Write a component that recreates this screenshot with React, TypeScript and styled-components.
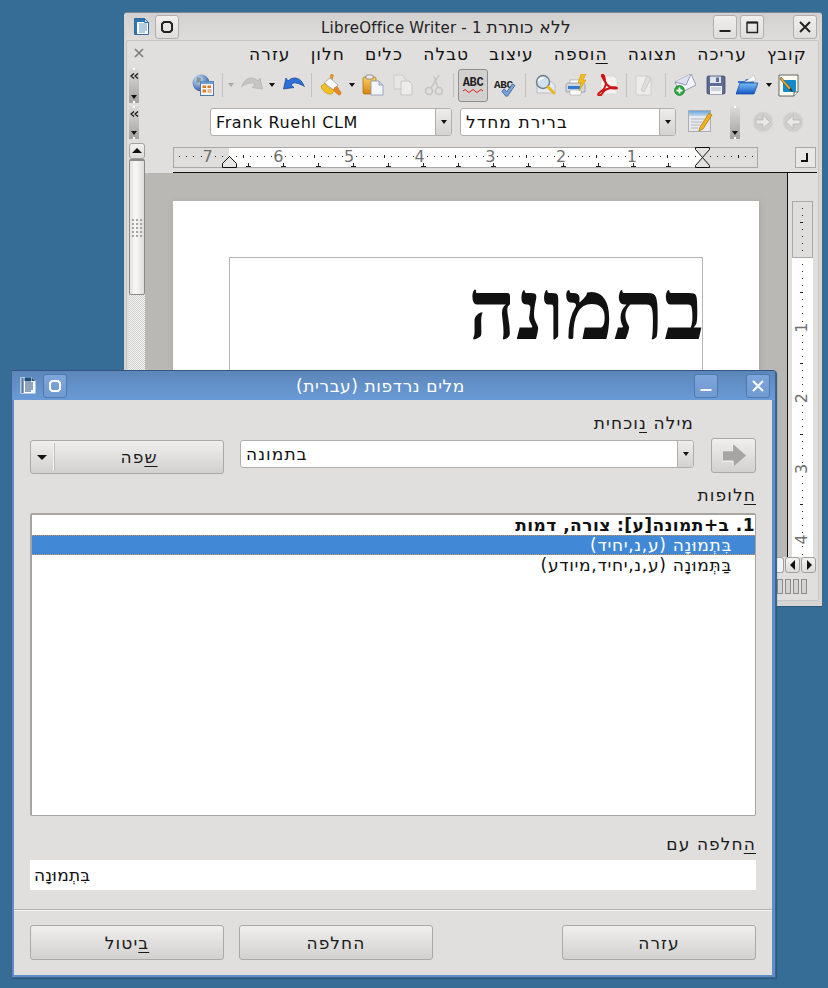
import React from 'react';
import styled, { createGlobalStyle, css } from 'styled-components';

const Global = createGlobalStyle`
  html, body {
    margin: 0;
    padding: 0;
    background: #366d96;
  }
  body {
    font-family: "DejaVu Sans", "Noto Sans", sans-serif;
    color: #111;
  }
  u {
    text-underline-offset: 3px;
  }
`;

const hebrewText = css`
  font-size: 17px;
  letter-spacing: 1.1px;
`;

const Desktop = styled.div`
  position: relative;
  width: 828px;
  height: 988px;
  overflow: hidden;
  background: #366d96;
`;

/* ---------- writer window ---------- */

const WriterWindow = styled.div`
  position: absolute;
  left: 124px;
  top: 12px;
  width: 698px;
  height: 594px;
  box-sizing: border-box;
  display: flex;
  flex-direction: column;
  padding: 0 3px 5px 2px;
  background: #d6d5d3;
  border-top: 1px solid #7c8790;
  border-radius: 3px 3px 0 0;
  box-shadow: 0 1px 1px #2c5878;
`;

const WriterTitle = styled.div`
  flex: none;
  height: 27px;
  display: flex;
  align-items: center;
  padding-right: 2px;
  background: linear-gradient(#d2d1cf, #dedddb);
`;

const TitleText = styled.div<{ $light?: boolean }>`
  flex: 1;
  min-width: 0;
  text-align: center;
  white-space: nowrap;
  font-size: 15px;
  letter-spacing: 0.2px;
  color: ${p => (p.$light ? '#fff' : '#222')};
`;

const TitleHebrew = styled.span<{ $spacing: number }>`
  font-size: 17px;
  letter-spacing: ${p => p.$spacing}px;
`;

const WinButton = styled.div<{ $ml?: number; $blue?: boolean }>`
  flex: none;
  width: 24px;
  height: 24px;
  margin-left: ${p => p.$ml ?? 0}px;
  box-sizing: border-box;
  display: flex;
  align-items: center;
  justify-content: center;
  border: 1px solid ${p => (p.$blue ? '#4f79ab' : '#b0afad')};
  border-radius: 3px;
  background: ${p => (p.$blue ? 'linear-gradient(#7ea6da, #7099d2)' : 'linear-gradient(#f0efee, #dfdedc)')};
`;

const TitleIcon = styled.div<{ $ml: number }>`
  flex: none;
  display: flex;
  margin-left: ${p => p.$ml}px;
`;

const Spacer = styled.div`
  flex: 1;
`;

const Panel = styled.div`
  flex: 1;
  min-height: 0;
  display: flex;
  flex-direction: column;
  background: #e0dfdd;
  border: 1px solid #c6c5c3;
  border-radius: 2px;
`;

const MenuRow = styled.div`
  position: relative;
  flex: none;
  height: 25px;
  display: flex;
  align-items: center;
  justify-content: flex-end;
  gap: 20px;
  padding-right: 11px;
  ${hebrewText}
`;

const MenuClose = styled.span`
  position: absolute;
  left: 7px;
  top: 7px;
  display: flex;
`;

const MenuItem = styled.span``;

const ToolRow = styled.div<{ $h: number }>`
  flex: none;
  height: ${p => p.$h}px;
  display: flex;
  align-items: center;
`;

const Tool = styled.div<{ $ml?: number; $w?: number }>`
  flex: none;
  display: flex;
  align-items: center;
  justify-content: center;
  width: ${p => p.$w ?? 22}px;
  margin-left: ${p => p.$ml ?? 0}px;
`;

const ToolSep = styled.div<{ $ml: number }>`
  flex: none;
  width: 1px;
  height: 24px;
  margin-left: ${p => p.$ml}px;
  background: #c4c3c1;
`;

const ToolDrop = styled.div<{ $ml: number; $off?: boolean }>`
  flex: none;
  width: 0;
  height: 0;
  margin-left: ${p => p.$ml}px;
  border-style: solid;
  border-width: 4px 3.5px 0 3.5px;
  border-color: ${p => (p.$off ? '#a9a8a6' : '#111')} transparent transparent transparent;
`;

const ToggledTool = styled.div<{ $ml: number }>`
  flex: none;
  width: 30px;
  height: 33px;
  box-sizing: border-box;
  margin-left: ${p => p.$ml}px;
  display: flex;
  align-items: center;
  justify-content: center;
  background: #d2d1cf;
  border: 1px solid #8f8e8c;
  border-radius: 3px;
`;

const Handle = styled.div<{ $ml?: number; $h: number; $bare?: boolean }>`
  position: relative;
  flex: none;
  width: 10px;
  height: ${p => p.$h}px;
  margin-left: ${p => p.$ml ?? 2}px;
  box-sizing: border-box;
  display: flex;
  flex-direction: column;
  align-items: center;
  justify-content: ${p => (p.$bare ? 'flex-end' : 'space-between')};
  padding: 5px 0 4px;
  background: linear-gradient(#dcdbd9, #a3a2a0);
  &::before,
  &::after {
    content: '';
    position: absolute;
    left: 4px;
    width: 2px;
    height: 2px;
    background: #fff;
  }
  &::before {
    top: 0;
  }
  &::after {
    bottom: 0;
  }
`;

const HandleDrop = styled.div`
  width: 0;
  height: 0;
  border-style: solid;
  border-width: 4px 3.5px 0 3.5px;
  border-color: #111 transparent transparent transparent;
`;

const Combo = styled.div<{ $ml: number; $w: number; $mt?: number }>`
  flex: none;
  box-sizing: border-box;
  width: ${p => p.$w}px;
  height: 28px;
  margin-left: ${p => p.$ml}px;
  margin-top: ${p => p.$mt ?? 0}px;
  display: flex;
  background: #fff;
  border: 1px solid #b0afad;
  border-radius: 3px;
  overflow: hidden;
`;

const ComboText = styled.div<{ $hebrew?: boolean }>`
  flex: 1;
  display: flex;
  align-items: center;
  padding: 0 5px;
  font-size: ${p => (p.$hebrew ? 17 : 16)}px;
  letter-spacing: ${p => (p.$hebrew ? 1.1 : 0.6)}px;
  white-space: nowrap;
`;

const ComboDrop = styled.div`
  flex: none;
  width: 15px;
  display: flex;
  align-items: center;
  justify-content: center;
  border-left: 1px solid #b0afad;
  background: linear-gradient(#eeedeb, #d3d2d0);
`;

const Body = styled.div`
  flex: 1;
  min-height: 0;
  display: flex;
  margin-top: 3px;
  padding-left: 2px;
`;

const LeftScroll = styled.div`
  flex: none;
  width: 16px;
  display: flex;
  flex-direction: column;
  box-sizing: border-box;
`;

const ScrollUp = styled.div`
  flex: none;
  height: 16px;
  box-sizing: border-box;
  display: flex;
  align-items: center;
  justify-content: center;
  border: 1px solid #a0a09e;
  border-radius: 3px;
  background: linear-gradient(#f4f3f2, #dcdbd9);
`;

const ScrollThumb = styled.div`
  flex: none;
  height: 136px;
  box-sizing: border-box;
  display: flex;
  align-items: center;
  justify-content: center;
  border: 1px solid #8b8a88;
  border-top: 2px solid #8b8a88;
  border-radius: 2px;
  background: linear-gradient(90deg, #e3e2e0, #f8f8f7 40%, #dedddb);
`;

const Gripper = styled.div`
  width: 12px;
  height: 19px;
  background-image: radial-gradient(#a5a4a2 0.8px, transparent 1px);
  background-size: 4px 4px;
`;

const ScrollTrack = styled.div`
  flex: 1;
  background-image: repeating-conic-gradient(#f4f4f4 0 25%, #cfcfcd 0 50%);
  background-size: 2px 2px;
`;

const MainColumn = styled.div`
  flex: 1;
  min-width: 0;
  display: flex;
  flex-direction: column;
`;

const RulerRow = styled.div`
  position: relative;
  flex: none;
  height: 30px;
  box-sizing: border-box;
  display: flex;
  align-items: flex-start;
  padding: 4px 2px 0 28px;
  &::after {
    content: '';
    position: absolute;
    left: 28px;
    right: 1px;
    bottom: 0;
    height: 1px;
    background: #111;
  }
`;

const CornerButton = styled.div`
  flex: none;
  width: 21px;
  height: 21px;
  margin-left: auto;
  box-sizing: border-box;
  display: flex;
  align-items: center;
  justify-content: center;
  border: 1px solid #a8a7a5;
  background: #e8e7e5;
`;

const DocRow = styled.div`
  flex: 1;
  min-height: 0;
  display: flex;
`;

const DocArea = styled.div`
  flex: 1;
  min-width: 0;
  overflow: hidden;
  box-sizing: border-box;
  padding: 28px 0 0 28px;
  background: #b9b8b5;
  border-right: 1px solid #111;
`;

const Page = styled.div`
  width: 586px;
  height: 700px;
  box-sizing: border-box;
  padding: 56px 56px 0;
  background: #fff;
  box-shadow: 1px 1px 6px #a5a4a1;
`;

const TextFrame = styled.div`
  height: 300px;
  border: 1px solid #b5b5b5;
  border-width: 1px 1px 0 1px;
  text-align: right;
`;

const Heading = styled.div`
  margin-right: -2px;
  font-family: "Liberation Serif", serif;
  font-weight: bold;
  font-size: 83px;
  line-height: 107px;
  color: #111;
`;

const VRulerCol = styled.div`
  flex: none;
  width: 30px;
  box-sizing: border-box;
  padding: 28px 0 0 4px;
`;

const HScrollRow = styled.div`
  flex: none;
  height: 16px;
  display: flex;
  justify-content: flex-end;
  gap: 1px;
  padding-right: 2px;
`;

const ArrowBtn = styled.div`
  flex: none;
  width: 15px;
  height: 16px;
  box-sizing: border-box;
  display: flex;
  align-items: center;
  justify-content: center;
  border: 1px solid #a0a09e;
  border-radius: 3px;
  background: linear-gradient(#f4f3f2, #dcdbd9);
`;

const HThumb = styled.div`
  flex: none;
  width: 14px;
  box-sizing: border-box;
  background: #f4f3f2;
  border: 1px solid #a0a09e;
  border-left: none;
  border-radius: 0 3px 3px 0;
`;

const StatusBar = styled.div`
  flex: none;
  height: 27px;
  display: flex;
  align-items: center;
  justify-content: flex-end;
  gap: 2px;
  padding: 0 11px 0 0;
`;

const StatusCell = styled.div`
  width: 4px;
  height: 13px;
  border: 1px solid #8d8c8a;
  background: #d4d3d1;
`;

/* ---------- thesaurus dialog ---------- */

const Dialog = styled.div`
  position: absolute;
  left: 11px;
  top: 370px;
  width: 765px;
  height: 608px;
  box-sizing: border-box;
  display: flex;
  flex-direction: column;
  border: 1px solid #3f628e;
  border-top-color: #33557f;
  border-radius: 3px 3px 0 0;
  background: #5f8dc7;
  padding: 1px 3px 2px 2px;
  box-shadow: 1px 1px 1px #2c5878;
`;

const DialogTitle = styled.div`
  flex: none;
  height: 29px;
  display: flex;
  align-items: center;
  background: linear-gradient(#5c86b9, #6a9bd7);
  margin: -1px -3px 0 -2px;
  padding-right: 5px;
`;

const DialogBody = styled.div`
  flex: 1;
  min-height: 0;
  display: flex;
  flex-direction: column;
  background: #e0dfdd;
`;

const DialogContent = styled.div`
  flex: 1;
  min-height: 0;
  display: flex;
  flex-direction: column;
  padding: 0 16px;
`;

const FieldLabel = styled.div<{ $mt: number; $mr?: number }>`
  flex: none;
  height: 18px;
  line-height: 18px;
  margin-top: ${p => p.$mt}px;
  margin-right: ${p => p.$mr ?? 0}px;
  ${hebrewText}
  text-align: right;
  direction: rtl;
  color: #1a1a1a;
`;

const SearchRow = styled.div`
  flex: none;
  display: flex;
  align-items: flex-start;
  margin-top: 6px;
`;

const PushButton = styled.div<{ $w?: number; $h?: number; $ml?: number; $mt?: number; $pl?: number }>`
  flex: none;
  position: relative;
  box-sizing: border-box;
  width: ${p => p.$w ?? 194}px;
  height: ${p => p.$h ?? 35}px;
  margin-left: ${p => p.$ml ?? 0}px;
  margin-top: ${p => p.$mt ?? 0}px;
  padding-left: ${p => p.$pl ?? 0}px;
  display: flex;
  align-items: center;
  justify-content: center;
  border: 1px solid #aaa9a7;
  border-radius: 3px;
  background: linear-gradient(#f0efed, #d2d1cf);
  ${hebrewText}
  color: #1a1a1a;
`;

const LangDrop = styled.div`
  position: absolute;
  left: 0;
  top: 2px;
  bottom: 2px;
  width: 22px;
  display: flex;
  align-items: center;
  justify-content: center;
  border-right: 1px solid #f6f6f5;
  box-shadow: 1px 0 0 #bdbcba;
`;

const LargeDrop = styled.div`
  width: 0;
  height: 0;
  border-style: solid;
  border-width: 5px 5px 0 5px;
  border-color: #111 transparent transparent transparent;
`;

const ListBox = styled.div`
  flex: none;
  height: 303px;
  box-sizing: border-box;
  margin-top: 9px;
  background: #fff;
  border: 1px solid #a6a5a3;
  border-width: 2px 1px 1px 2px;
  border-radius: 2px;
  direction: rtl;
  font-size: 17px;
`;

const ListRow = styled.div<{ $head?: boolean; $selected?: boolean }>`
  height: 20px;
  line-height: 20px;
  box-sizing: border-box;
  padding-right: ${p => (p.$head ? 0 : 23)}px;
  font-weight: ${p => (p.$head ? 'bold' : 'normal')};
  letter-spacing: ${p => (p.$head ? 0.45 : 0.7)}px;
  color: ${p => (p.$selected ? '#fff' : '#111')};
  background: ${p => (p.$selected ? '#4188d6' : 'transparent')};
  white-space: nowrap;
  ${p =>
    p.$selected &&
    css`
      border-top: 1px dotted #c8925a;
      border-bottom: 1px dotted #c8925a;
      line-height: 18px;
    `}
`;

const ReplaceInput = styled.div`
  flex: none;
  height: 30px;
  line-height: 30px;
  margin-top: 7px;
  padding-left: 4px;
  background: #fff;
  font-size: 17px;
  letter-spacing: 0.2px;
`;

const Footer = styled.div`
  flex: none;
  height: 66px;
  box-sizing: border-box;
  display: flex;
  align-items: flex-start;
  padding: 15px 16px 0;
  border-top: 1px solid #b3b2b0;
  box-shadow: inset 0 1px 0 #f4f4f3;
`;

/* ---------- icons ---------- */

const Glyph = ({ size = 22, children }: { size?: number; children: React.ReactNode }) => (
  <svg width={size} height={size} viewBox="0 0 22 22">
    {children}
  </svg>
);

const DocIcon = () => (
  <svg width="15" height="17" viewBox="0 0 15 17">
    <path d="M0.5 0.5h10l4 4v12H0.5z" fill="#fff" stroke="#2d6ca3" />
    <path d="M1 1h2v15H1zM3 1h7v3H3z" fill="#2d74b0" />
    <path d="M5 6h8M5 8h8M5 10h8M5 12h8M5 14h6" stroke="#6d9cc4" />
    <path d="M10.500 0.500l4 4h-4z" fill="#cfe0ef" stroke="#2d6ca3" />
  </svg>
);

const DialogDocIcon = () => (
  <svg width="16" height="17" viewBox="0 0 16 17">
    <path d="M0.500 0.500h11l4 4v12H0.500z" fill="#fff" />
    <path d="M2 1v15M3 1v15" stroke="#1e4a7a" />
    <path d="M11 1H5v3h6zM5 6h8M5 8h8M5 10h8M5 12h8M5 14h6" stroke="#1e4a7a" fill="#1e4a7a" />
    <path d="M12 1l3 3h-3z" fill="#1e4a7a" />
  </svg>
);

const Sticky = ({ color }: { color: string }) => (
  <svg width="14" height="14" viewBox="0 0 14 14">
    <path d="M4 2h6l2 2v6l-2 2H4l-2-2V4z" fill="none" stroke={color} strokeWidth="2" />
  </svg>
);

const MinGlyph = ({ color }: { color: string }) => (
  <svg width="14" height="14" viewBox="0 0 14 14">
    <rect x="1.500" y="10" width="11" height="2" fill={color} />
  </svg>
);

const MaxGlyph = () => (
  <svg width="14" height="14" viewBox="0 0 14 14">
    <path d="M2 2.500h10.500v10H2z" fill="none" stroke="#222" strokeWidth="1.4" />
    <path d="M2 2.500h10.500" stroke="#222" strokeWidth="2" />
  </svg>
);

const CloseGlyph = ({ color }: { color: string }) => (
  <svg width="14" height="14" viewBox="0 0 14 14">
    <path d="M2 2l10 10M12 2L2 12" stroke={color} strokeWidth="2" />
  </svg>
);

const MenuX = () => (
  <svg width="10" height="10" viewBox="0 0 10 10">
    <path d="M1 1l8 8M9 1L1 9" stroke="#7d7d7b" strokeWidth="1.7" />
  </svg>
);

const Chevrons = () => (
  <svg width="9" height="6" viewBox="0 0 9 6">
    <path d="M4 0.500L1 3l3 2.500M8 0.500L5 3l3 2.500" fill="none" stroke="#111" strokeWidth="1.2" />
  </svg>
);

const GlobeIcon = () => (
  <Glyph>
    <defs>
      <radialGradient id="gl" cx="0.35" cy="0.3" r="0.8">
        <stop offset="0" stopColor="#dbe8f6" />
        <stop offset="0.6" stopColor="#5f87c4" />
        <stop offset="1" stopColor="#24447f" />
      </radialGradient>
    </defs>
    <circle cx="9" cy="9" r="8.500" fill="url(#gl)" />
    <path d="M5 3l4 1-1 4-4 1zM11 10l3 1-2 5-2-2z" fill="#3c6a4f" opacity="0.55" />
    <rect x="8.500" y="7.500" width="13" height="14" fill="#f4f6fa" stroke="#4d78a8" />
    <rect x="8.500" y="7.500" width="13" height="2.500" fill="#6d9ccd" />
    <rect x="10.500" y="11.500" width="3.500" height="2.500" fill="#e07a1f" />
    <rect x="15.500" y="11.500" width="3.500" height="2.500" fill="#e07a1f" />
    <rect x="10.500" y="15.500" width="3.500" height="3" fill="#e07a1f" />
    <path d="M15.500 16h4M15.500 18h4" stroke="#e07a1f" />
  </Glyph>
);

const CurveArrow = ({ fill, stroke, flip }: { fill: string; stroke: string; flip?: boolean }) => (
  <Glyph>
    <g transform={flip ? 'translate(22 0) scale(-1 1)' : undefined}>
      <path
        d="M1 12C3 6 7 4 10.500 4c3 0 5 1.500 6.500 3l2-3 2.500 11-10.500-1.500 3-2.500c-1-1.500-3-2.500-5-2-3 .5-6 2-8.500 3.500z"
        fill={fill}
        stroke={stroke}
        strokeWidth="0.7"
        strokeLinejoin="round"
      />
    </g>
  </Glyph>
);

const BucketIcon = () => (
  <Glyph>
    <path d="M11 0l2.500 1-2 8-2.500-1z" fill="#e79a2c" stroke="#b87416" strokeWidth="0.4" />
    <path d="M4 9l6-5 8 7-4 5z" fill="#fafafa" stroke="#9c9c9c" strokeWidth="0.7" />
    <path d="M1 12l4-3c2 4 5 6 9 7l-2 4c-5 1-10-3-11-8z" fill="#f1c21f" stroke="#c08a12" strokeWidth="0.6" />
    <path d="M14.500 13.500l2.500-1 4 6c.5 1.500-1 3-2.500 2.500l-4.500-4z" fill="#e8871e" stroke="#b8600f" strokeWidth="0.4" />
  </Glyph>
);

const PasteIcon = () => (
  <Glyph>
    <defs>
      <linearGradient id="pa" x1="0" y1="0" x2="0" y2="1">
        <stop offset="0" stopColor="#f7cf60" />
        <stop offset="1" stopColor="#d98212" />
      </linearGradient>
    </defs>
    <rect x="1" y="3" width="13" height="17" rx="1.500" fill="url(#pa)" stroke="#a06a14" strokeWidth="0.7" />
    <rect x="4" y="1" width="7" height="4" rx="1" fill="#e9e9e9" stroke="#777" strokeWidth="0.7" />
    <path d="M9 7h8l4 4v10H9z" fill="#f4f5fa" stroke="#8a94ad" strokeWidth="0.8" />
    <path d="M17 7v4h4" fill="#c8cfe0" stroke="#8a94ad" strokeWidth="0.8" />
  </Glyph>
);

const CopyIcon = () => (
  <Glyph>
    <path d="M2 1h8l3 3v11H2z" fill="#e6e6e4" stroke="#cbcac8" />
    <path d="M9 7h8l3 3v11H9z" fill="#ececea" stroke="#c6c5c3" />
  </Glyph>
);

const ScissorsIcon = () => (
  <Glyph>
    <path d="M16 1L8 14M11 2l4 12" stroke="#c9c8c6" strokeWidth="1.8" fill="none" />
    <circle cx="6" cy="17" r="3.500" fill="none" stroke="#c4c3c1" strokeWidth="1.6" />
    <circle cx="16" cy="17" r="3.500" fill="none" stroke="#c4c3c1" strokeWidth="1.6" />
  </Glyph>
);

const AbcLabel = styled.span<{ $size: number }>`
  font-family: "Liberation Mono", monospace;
  font-size: ${p => p.$size}px;
  font-weight: bold;
  line-height: 10px;
  letter-spacing: -0.4px;
  color: #222;
`;

const AbcStack = styled.div`
  display: flex;
  flex-direction: column;
  align-items: center;
`;

const AbcPlain = styled.div`
  position: relative;
  width: 22px;
  height: 23px;
  margin-top: -2px;
`;

const AbcCheck = styled.div`
  position: absolute;
  left: 5px;
  top: 9px;
`;

const WavyIcon = () => (
  <svg width="20" height="5" viewBox="0 0 20 5">
    <path d="M0 3q2-3 4 0t4 0 4 0 4 0 4 0" stroke="#d82020" fill="none" />
  </svg>
);

const CheckIcon = () => (
  <svg width="17" height="14" viewBox="0 0 20 17">
    <path d="M3 10l3-3 3 4 7-10 3 2-9 13H8z" fill="#7ba4da" stroke="#28558f" strokeWidth="0.9" strokeLinejoin="round" />
  </svg>
);

const MagnifierIcon = () => (
  <Glyph>
    <path d="M3 6h12l6 5v8H3z" fill="#e8e9ee" stroke="#a9adb8" strokeWidth="0.7" />
    <circle cx="9" cy="8" r="6.500" fill="#d0e2ec" stroke="#6d7f8a" strokeWidth="1.4" />
    <path d="M4.500 7c1-2 3-3 5-3" stroke="#fff" fill="none" strokeWidth="1.4" />
    <path d="M14 13l6 6" stroke="#e8b523" strokeWidth="3" strokeLinecap="round" />
  </Glyph>
);

const PrinterIcon = () => (
  <Glyph>
    <path d="M5 6h10v6H5z" fill="#fff" stroke="#9aa0ab" strokeWidth="0.6" />
    <path d="M1 11c0-1 1-2 2-2h14c2 0 3 1 3 2v7H1z" fill="#d4d7dd" stroke="#8a8e97" strokeWidth="0.7" />
    <path d="M3 12h12v3H3z" fill="#2f7bd1" />
    <path d="M5 16h11v5H5z" fill="#fff" stroke="#a6a9af" strokeWidth="0.6" />
    <path d="M16 0h5l-3 6h3l-7 11 2-8h-3z" fill="#f2bd1c" stroke="#c98a0a" strokeWidth="0.5" />
  </Glyph>
);

const PdfIcon = () => (
  <Glyph>
    <path d="M5 2h13l3 3v15H5z" fill="#f3f2f0" stroke="#d4d3d1" strokeWidth="0.7" />
    <path
      d="M6 1c2-1 3 3 3 6 1 3 3 5 5 6 2 0 6 0 7 1-2 1-5 0-7 0l-5 2-4 5c-2 1-4 0-2-2l5-4 2-5C9 6 5 3 6 1z"
      fill="none"
      stroke="#d01414"
      strokeWidth="2"
      strokeLinejoin="round"
    />
  </Glyph>
);

const EditDocIcon = () => (
  <Glyph>
    <path d="M3 2h10l5 3v16H3z" fill="#ececea" stroke="#cfcecc" />
    <path d="M8 16l6-14 4 2-7 14z" fill="#dfdedc" stroke="#c4c3c1" strokeWidth="0.8" />
  </Glyph>
);

const EnvelopeIcon = () => (
  <Glyph>
    <path d="M1 8L17 0l5 11L6 19z" fill="#f2f2fa" stroke="#8387ac" strokeWidth="0.8" />
    <path d="M1 8l11 3L17 0" fill="#dfe0ef" stroke="#8387ac" strokeWidth="0.8" />
    <circle cx="5.500" cy="16.500" r="5" fill="#28a63a" stroke="#0f7a20" strokeWidth="0.6" />
    <path d="M5.500 13.500v6M2.500 16.500h6" stroke="#fff" strokeWidth="1.8" />
  </Glyph>
);

const FloppyIcon = () => (
  <Glyph>
    <rect x="2" y="2" width="18" height="18" rx="1.500" fill="#5c6c94" stroke="#2f3c62" strokeWidth="0.7" />
    <rect x="5" y="2.500" width="11" height="6.500" fill="#dfe3ee" />
    <rect x="11" y="3.500" width="3" height="4.500" fill="#5c6c94" />
    <rect x="5" y="12" width="12" height="8" fill="#f4f5f8" />
    <path d="M6 14h10M6 16h10" stroke="#aab0c2" />
  </Glyph>
);

const FolderIcon = () => (
  <Glyph>
    <defs>
      <linearGradient id="fo" x1="0" y1="0" x2="0" y2="1">
        <stop offset="0" stopColor="#7cc0f4" />
        <stop offset="1" stopColor="#1257c6" />
      </linearGradient>
    </defs>
    <path d="M2 7h7l1-2h8v4H2z" fill="#3a78cf" />
    <path d="M9 8l9-7 2 6z" fill="#f6f6f6" stroke="#b5b5b5" strokeWidth="0.5" />
    <path d="M4 9h18l-4 11H0z" fill="url(#fo)" stroke="#0e44a0" strokeWidth="0.7" />
  </Glyph>
);

const NavigatorIcon = () => (
  <svg width="21" height="23" viewBox="0 0 21 23">
    <path d="M1 1h19v17l-4 4H1z" fill="#fbfaf2" stroke="#444" strokeWidth="0.8" />
    <path d="M16 22v-4h4" fill="#fff" stroke="#444" strokeWidth="0.8" />
    <rect x="5" y="6" width="13" height="12" rx="1" fill="#148bc9" />
    <path d="M3 3l10 11-2 2L2 5z" fill="#d9a72a" stroke="#3a3a3a" strokeWidth="0.5" />
    <path d="M11 16l2-2 2 4z" fill="#333" />
  </svg>
);

const NoteIcon = () => (
  <svg width="25" height="24" viewBox="0 0 25 24">
    <defs>
      <linearGradient id="no" x1="0" y1="0" x2="0" y2="1">
        <stop offset="0" stopColor="#6aa8dd" />
        <stop offset="1" stopColor="#c4d6e6" />
      </linearGradient>
    </defs>
    <rect x="0.500" y="0.500" width="22" height="21" fill="#e7e9ec" stroke="#a9adb3" />
    <rect x="1" y="1" width="21" height="5" fill="url(#no)" />
    <path d="M3 9h13M3 12h11M3 15h9M3 18h7" stroke="#b4b8be" />
    <path d="M21 3l3 2-9 14-4 2 1-4z" fill="#f2b01e" stroke="#a8780f" strokeWidth="0.7" />
  </svg>
);

const RoundArrow = ({ flip }: { flip?: boolean }) => (
  <svg width="22" height="22" viewBox="0 0 22 22">
    <circle cx="11" cy="11" r="10" fill="#cfcecc" stroke="#d8d7d5" />
    <path
      transform={flip ? 'translate(22 0) scale(-1 1)' : undefined}
      d="M4 9h7V4.500l7 6.500-7 6.500V13H4z"
      fill="#e9e8e6"
      stroke="#b6b5b3"
      strokeWidth="0.7"
    />
  </svg>
);

const SmallTriangle = ({ dir }: { dir: 'up' | 'down' | 'left' | 'right' }) => {
  const d = { up: 'M0 7L5 2l5 5z', down: 'M0 3h10L5 8z', left: 'M7 0v10L2 5z', right: 'M3 0v10l5-5z' }[dir];
  return (
    <svg width="10" height="10" viewBox="0 0 10 10">
      <path d={d} fill="#111" />
    </svg>
  );
};

const DialogArrow = () => (
  <svg width="26" height="25" viewBox="0 0 30 28">
    <path d="M1 8h13V1l15 13-15 13v-7H1z" fill="#a6a5a3" />
    <path d="M1.500 20V8.500H14" fill="none" stroke="#fff" />
    <path d="M1.500 20.500H14v6" fill="none" stroke="#fff" />
  </svg>
);

const CornerGlyph = () => (
  <svg width="11" height="11" viewBox="0 0 11 11">
    <path d="M7 1v8H1" fill="none" stroke="#111" strokeWidth="2" />
  </svg>
);

/* ---------- rulers ---------- */

const RulerSvg = styled.svg`
  flex: none;
  display: block;
`;

const HorizontalRuler = () => {
  const zero = 529.5;
  const marks = [];
  for (let n = -7; n <= 75; n++) {
    const x = zero - n * 7.07;
    if (n > 0 && n % 10 === 0) {
      marks.push(
        <text key={n} x={x} y={15} textAnchor="middle" fontSize="16" fontFamily="DejaVu Sans" fill="#707070">
          {n / 10}
        </text>,
      );
    } else if (n !== 0 && Math.abs(n) % 5 === 0) {
      marks.push(<rect key={n} x={Math.round(x)} y={8} width={1} height={3} fill="#222" />);
    } else if (n !== 0) {
      marks.push(<rect key={n} x={Math.round(x)} y={9} width={1} height={1} fill="#222" />);
    }
  }
  const stops = [];
  for (let i = 0; i < 13; i++) {
    const x = 75 + i * 35;
    stops.push(<path key={i} d={`M${x - 2} 19.5h5M${x + 0.5} 16v3`} stroke="#222" fill="none" />);
  }
  return (
    <RulerSvg width="585" height="21" viewBox="0 0 585 21">
      <rect x="0.500" y="0.500" width="584" height="20" fill="#dfdedc" stroke="#a9a8a6" />
      <rect x="56" y="1" width="474" height="19" fill="#fff" />
      {marks}
      {stops}
      <path d="M49.500 20.500v-4l7-7 7 7v4z" fill="#e8e7e5" stroke="#111" />
      <path d="M522.500 0.500h14v2l-7 8 7 8v2h-14v-2l7-8-7-8z" fill="#e4e3e1" stroke="#111" />
    </RulerSvg>
  );
};

const VerticalRuler = () => {
  const zero = 56;
  const marks = [];
  for (let n = -7; n <= 49; n++) {
    const y = zero + n * 7.06;
    if (n > 0 && n % 10 === 0) {
      marks.push(
        <text
          key={n}
          x={0}
          y={0}
          transform={`translate(15 ${y}) rotate(-90)`}
          textAnchor="middle"
          fontSize="16"
          fontFamily="DejaVu Sans"
          fill="#707070"
        >
          {n / 10}
        </text>,
      );
    } else if (n !== 0 && Math.abs(n) % 5 === 0) {
      marks.push(<rect key={n} x={8} y={Math.round(y)} width={3} height={1} fill="#222" />);
    } else if (n !== 0) {
      marks.push(<rect key={n} x={10} y={Math.round(y)} width={1} height={1} fill="#222" />);
    }
  }
  return (
    <RulerSvg width="21" height="356" viewBox="0 0 21 356">
      <rect x="0" y="0" width="21" height="356" fill="#fff" />
      <rect x="0.500" y="0.500" width="20" height="56" fill="#dfdedc" stroke="#a9a8a6" />
      {marks}
    </RulerSvg>
  );
};

/* ---------- page ---------- */

const menuItems: React.ReactNode[] = [
  'עזרה',
  'חלון',
  'כלים',
  'טבלה',
  'עיצוב',
  <><u>ה</u>וספה</>,
  'תצוגה',
  'עריכה',
  'קובץ',
];

const App: React.FC = () => {
  return (
    <Desktop>
      <Global />

      <WriterWindow>
        <WriterTitle>
          <TitleIcon $ml={8}>
            <DocIcon />
          </TitleIcon>
          <WinButton $ml={6}>
            <Sticky color="#222" />
          </WinButton>
          <TitleText dir="rtl"><TitleHebrew $spacing={0.3}>ללא כותרת</TitleHebrew> 1 - LibreOffice Writer</TitleText>
          <WinButton>
            <MinGlyph color="#222" />
          </WinButton>
          <WinButton $ml={3}>
            <MaxGlyph />
          </WinButton>
          <WinButton $ml={29}>
            <CloseGlyph color="#222" />
          </WinButton>
        </WriterTitle>

        <Panel>
          <MenuRow>
            <MenuClose>
              <MenuX />
            </MenuClose>
            {menuItems.map((item, i) => (
              <MenuItem key={i} dir="rtl">
                {item}
              </MenuItem>
            ))}
          </MenuRow>

          <ToolRow $h={38}>
            <Handle $h={35}>
              <Chevrons />
              <HandleDrop />
            </Handle>
            <Tool $ml={53}><GlobeIcon /></Tool>
            <ToolSep $ml={8} />
            <ToolDrop $ml={5} $off />
            <Tool $ml={7}><CurveArrow fill="#c6c5c3" stroke="#b3b2b0" /></Tool>
            <ToolDrop $ml={6} />
            <Tool $ml={8}><CurveArrow fill="#2c6fd6" stroke="#123f92" flip /></Tool>
            <ToolSep $ml={6} />
            <Tool $ml={8}><BucketIcon /></Tool>
            <ToolDrop $ml={7} />
            <Tool $ml={7}><PasteIcon /></Tool>
            <Tool $ml={8}><CopyIcon /></Tool>
            <Tool $ml={9}><ScissorsIcon /></Tool>
            <ToolSep $ml={8} />
            <ToggledTool $ml={4}>
              <AbcStack>
                <AbcLabel $size={12}>ABC</AbcLabel>
                <WavyIcon />
              </AbcStack>
            </ToggledTool>
            <Tool $ml={6}>
              <AbcPlain>
                <AbcCheck><CheckIcon /></AbcCheck>
                <AbcLabel $size={11}>ABC</AbcLabel>
              </AbcPlain>
            </Tool>
            <ToolSep $ml={9} />
            <Tool $ml={8}><MagnifierIcon /></Tool>
            <Tool $ml={9}><PrinterIcon /></Tool>
            <Tool $ml={9}><PdfIcon /></Tool>
            <ToolSep $ml={8} />
            <Tool $ml={6}><EditDocIcon /></Tool>
            <ToolSep $ml={10} />
            <Tool $ml={8}><EnvelopeIcon /></Tool>
            <Tool $ml={9}><FloppyIcon /></Tool>
            <Tool $ml={9}><FolderIcon /></Tool>
            <ToolDrop $ml={8} />
            <Tool $ml={6} $w={21}><NavigatorIcon /></Tool>
          </ToolRow>

          <ToolRow $h={36}>
            <Handle $h={33}>
              <Chevrons />
              <HandleDrop />
            </Handle>
            <Combo $ml={71} $w={242}>
              <ComboText>Frank Ruehl CLM</ComboText>
              <ComboDrop><HandleDrop /></ComboDrop>
            </Combo>
            <Combo $ml={8} $w={216}>
              <ComboText $hebrew>ברירת מחדל</ComboText>
              <ComboDrop><HandleDrop /></ComboDrop>
            </Combo>
            <Tool $ml={12} $w={25}><NoteIcon /></Tool>
            <Handle $ml={17} $h={33} $bare>
              <HandleDrop />
            </Handle>
            <Tool $ml={12}><RoundArrow /></Tool>
            <Tool $ml={8}><RoundArrow flip /></Tool>
          </ToolRow>

          <Body>
            <LeftScroll>
              <ScrollUp><SmallTriangle dir="up" /></ScrollUp>
              <ScrollThumb><Gripper /></ScrollThumb>
              <ScrollTrack />
            </LeftScroll>
            <MainColumn>
              <RulerRow>
                <HorizontalRuler />
                <CornerButton><CornerGlyph /></CornerButton>
              </RulerRow>
              <DocRow>
                <DocArea>
                  <Page>
                    <TextFrame>
                      <Heading dir="rtl">בתמונה</Heading>
                    </TextFrame>
                  </Page>
                </DocArea>
                <VRulerCol>
                  <VerticalRuler />
                </VRulerCol>
              </DocRow>
            </MainColumn>
          </Body>
          <HScrollRow>
            <HThumb />
            <ArrowBtn><SmallTriangle dir="left" /></ArrowBtn>
            <ArrowBtn><SmallTriangle dir="right" /></ArrowBtn>
          </HScrollRow>
          <StatusBar>
            <StatusCell />
            <StatusCell />
            <StatusCell />
            <StatusCell />
          </StatusBar>
        </Panel>
      </WriterWindow>

      <Dialog>
        <DialogTitle>
          <TitleIcon $ml={8}>
            <DialogDocIcon />
          </TitleIcon>
          <WinButton $ml={7} $blue>
            <Sticky color="#fff" />
          </WinButton>
          <TitleText $light dir="rtl"><TitleHebrew $spacing={0.6}>מלים נרדפות (עברית)</TitleHebrew></TitleText>
          <WinButton $blue>
            <MinGlyph color="#fff" />
          </WinButton>
          <WinButton $ml={28} $blue>
            <CloseGlyph color="#fff" />
          </WinButton>
        </DialogTitle>

        <DialogBody>
          <DialogContent>
            <FieldLabel $mt={14} $mr={62}>מילה <u>נ</u>וכחית</FieldLabel>
            <SearchRow>
              <PushButton $mt={2} $h={34} $pl={24}>
                <LangDrop><LargeDrop /></LangDrop>
                <span dir="rtl"><u>ש</u>פה</span>
              </PushButton>
              <Combo $ml={16} $w={454} $mt={2}>
                <ComboText $hebrew>בתמונה</ComboText>
                <ComboDrop><HandleDrop /></ComboDrop>
              </Combo>
              <PushButton $w={45} $ml={17}>
                <DialogArrow />
              </PushButton>
            </SearchRow>

            <FieldLabel $mt={12}><u>ח</u>לופות</FieldLabel>

            <ListBox>
              <ListRow $head>1. ב+תמונה[ע]: צורה, דמות</ListRow>
              <ListRow $selected>בִּתְמוּנָה (ע,נ,יחיד)</ListRow>
              <ListRow>בַּתְּמוּנָה (ע,נ,יחיד,מיודע)</ListRow>
            </ListBox>

            <FieldLabel $mt={19}><u>ה</u>חלפה עם</FieldLabel>
            <ReplaceInput>בִּתְמוּנָה</ReplaceInput>
          </DialogContent>

          <Footer>
            <PushButton><span dir="rtl"><u>ב</u>יטול</span></PushButton>
            <PushButton $ml={15}><span dir="rtl">החלפה</span></PushButton>
            <Spacer />
            <PushButton><span dir="rtl">עזרה</span></PushButton>
          </Footer>
        </DialogBody>
      </Dialog>
    </Desktop>
  );
};

export default App;
